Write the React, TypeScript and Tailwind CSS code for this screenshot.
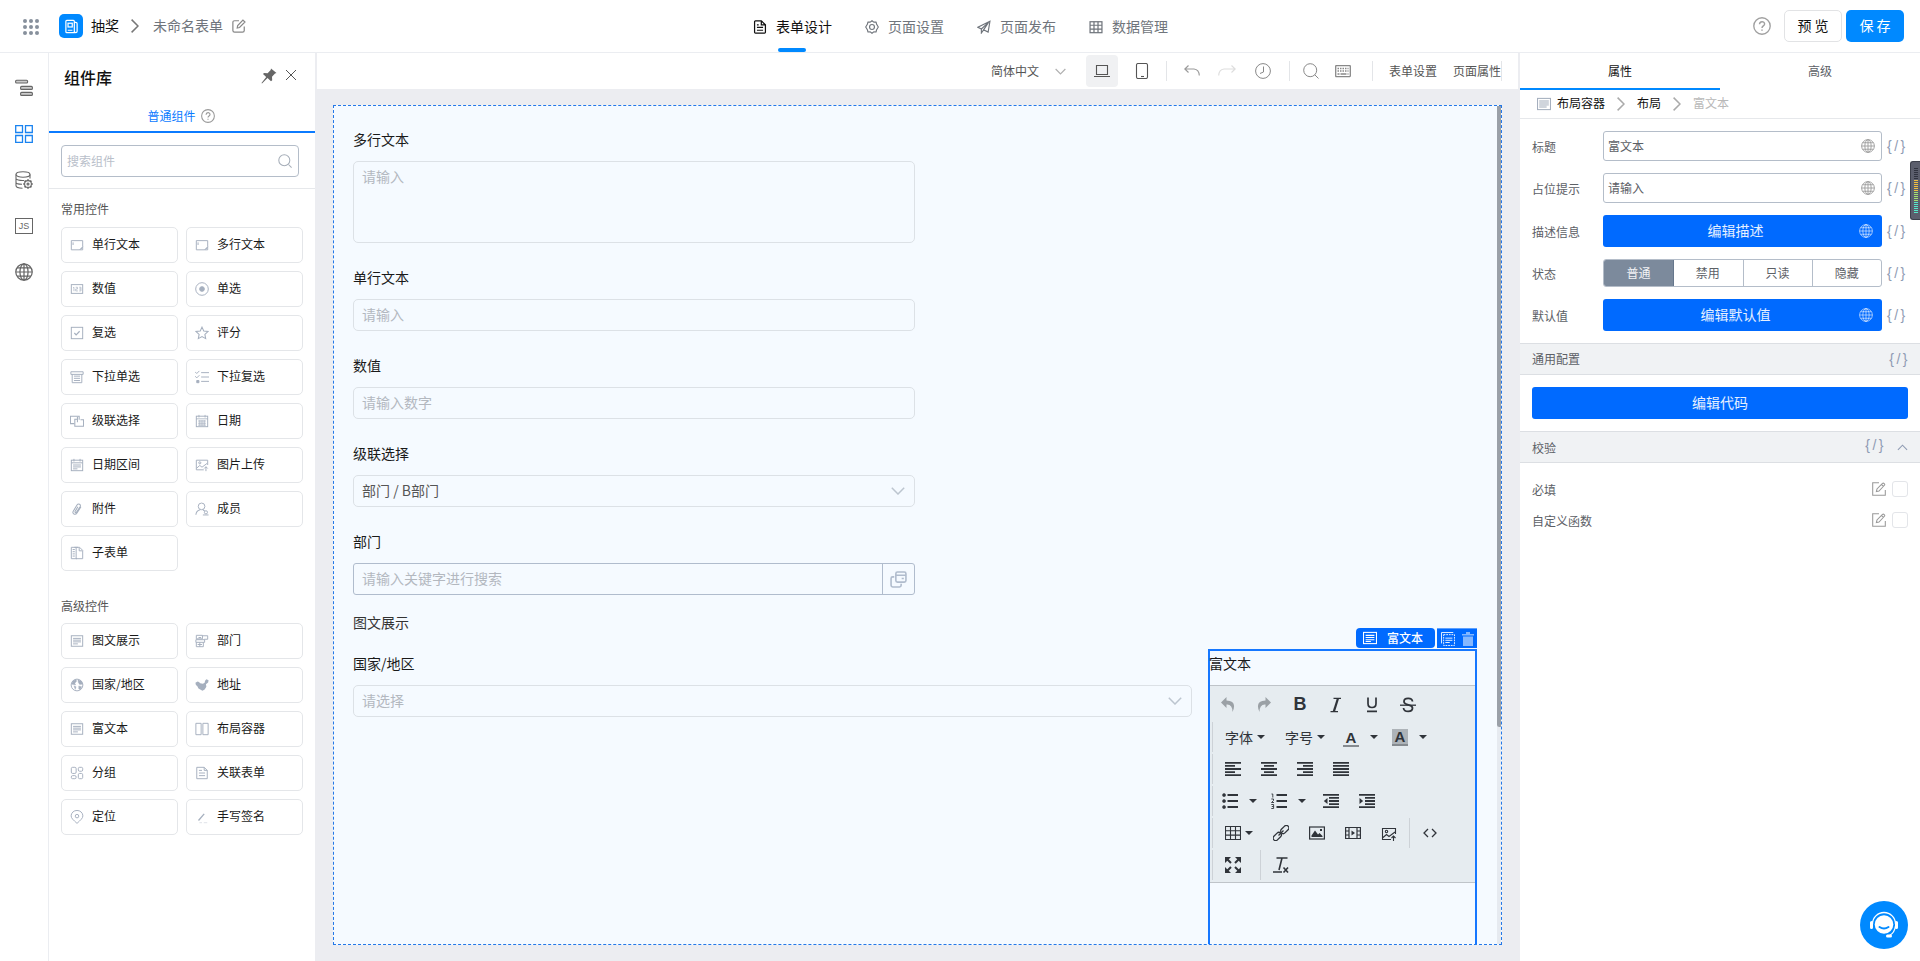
import React from 'react';

interface IconProps {
  children: React.ReactNode;
  box?: string;
  className?: string;
  strokeWidth?: number;
}

const Icon: React.FC<IconProps> = ({ children, box = '0 0 16 16', className = 'w-4 h-4', strokeWidth = 1 }) => (
  <svg viewBox={box} className={`shrink-0 ${className}`} fill="none" stroke="currentColor" strokeWidth={strokeWidth}>
    {children}
  </svg>
);

const GlobeIcon = ({ className = 'w-[14px] h-[14px]' }: { className?: string }) => (
  <Icon className={className} strokeWidth={1.1}>
    <circle cx="8" cy="8" r="7.3" />
    <ellipse cx="8" cy="8" rx="3.6" ry="7.3" />
    <path d="M8 .7v14.6M.7 8h14.6M1.8 4.3h12.4M1.8 11.7h12.4" />
  </Icon>
);

const HelpIcon = ({ className = 'w-[14px] h-[14px]' }: { className?: string }) => (
  <Icon className={className} strokeWidth={1.2}>
    <circle cx="8" cy="8" r="7.3" />
    <path d="M5.8 6.5c0-3 4.5-3 4.5-.3C10.3 8 8 7.9 8 9.7M8 11v1.3" strokeWidth={1.3} />
  </Icon>
);

const Chevron = ({ className = '' }: { className?: string }) => (
  <Icon box="0 0 8 14" className={`w-[8px] h-[14px] ${className}`} strokeWidth={1.5}>
    <path d="M.6.6L7 7 .6 13.4" />
  </Icon>
);

const DownIcon = ({ className = '' }: { className?: string }) => (
  <Icon box="0 0 14 8" className={className} strokeWidth={1.5}>
    <path d="M.8.8L7 7 13.2.8" />
  </Icon>
);

const icons: Record<string, React.ReactNode> = {
  input: (
    <>
      <path d="M14.5 10V3h-13v10.5H11M3.5 5v3" />
      <path d="M14.5 10v3.5H11zM12 13l2-2" />
    </>
  ),
  number: (
    <>
      <rect x="1.5" y="3" width="13" height="10" />
      <path d="M3.5 6.5L4.5 6v4.5M6.5 6h2v2h-2v2.2h2.5M10.5 6h2v4.2h-2M10.5 8h2" strokeWidth={0.8} />
    </>
  ),
  radio: (
    <>
      <circle cx="8" cy="8" r="7.2" />
      <circle cx="8" cy="8" r="2.7" fill="currentColor" />
    </>
  ),
  check: (
    <>
      <rect x="1.5" y="1.5" width="13" height="13" />
      <path d="M5 8l2 2.2 4-4.2" strokeWidth={1.3} />
    </>
  ),
  star: <path d="M8 1.3l2 4.4 4.8.6-3.5 3.3.9 4.8L8 12.1l-4.2 2.3.9-4.8L1.2 6.3 6 5.7z" strokeWidth={1.2} />,
  select: (
    <>
      <path d="M1 2h14v3H1zM2.5 5v9.5h11V5" />
      <path d="M4.5 7h7M4.5 9.5h7M4.5 12h7" />
    </>
  ),
  multi: (
    <>
      <path d="M0 2l2 2 3-3M0 7l2 2 3-3M7 3h9M7 8h9M7 13h9" />
      <path d="M2 12h2.5v2.5H2z" fill="currentColor" />
    </>
  ),
  cascade: (
    <>
      <path d="M5 11H.5V2.500h10V6.500" strokeWidth={1.2} />
      <path d="M8 6H5.500v8h10V6.500H12M8.500 3v6.500" strokeWidth={1.2} />
    </>
  ),
  date: (
    <>
      <rect x="1.5" y="2.5" width="13" height="12" />
      <path d="M1.500 5.500h13M4.500 1v3M11.500 1v3M3.500 8h9M3.500 10.500h9M3.500 12.700h9M5.500 7v6.500M8 7v6.500M10.500 7v6.500" strokeWidth={0.9} />
    </>
  ),
  range: (
    <>
      <rect x="1.5" y="2.5" width="13" height="12" />
      <path d="M1.500 5.500h13M4.500 1v3M11.500 1v3M3.500 8h9M3.500 10.200h9M3.500 12.400h5" />
    </>
  ),
  image: (
    <>
      <path d="M14.500 8V2.500h-13v11H10M2 11.500l3.500-3 2.500 2L14 6" />
      <circle cx="5.5" cy="5.5" r="1.2" />
      <path d="M12.500 15v-5M10.500 12l2-2 2 2" />
    </>
  ),
  clip: <path d="M12.500 5.500l-4.500 7c-2 3-6 1-4.300-2L8 3.500c1.500-2.500 5-.7 3.500 2l-4 6c-.8 1.200-2.300.4-1.600-.9L9 5.500" strokeWidth={1.2} />,
  member: (
    <>
      <circle cx="7.5" cy="5" r="3.8" />
      <path d="M1 14.500c.3-3 2-5 5-5.700M9 9c1 .3 1.500.8 2 1.200" strokeWidth={1.2} />
      <circle cx="12.5" cy="11.8" r="1.8" />
      <path d="M9 14.800h6.500" />
    </>
  ),
  subform: (
    <>
      <path d="M9 1.500H1.500v13H8M5 1.500h6L14.500 5v9.500H7V2M10.500 2v3.500H14" />
      <path d="M3 4h2.500M3 6.500h2.500M3 9h2.500M3 11.500h2.500" />
    </>
  ),
  text: (
    <>
      <rect x="1.500" y="2" width="13" height="12" />
      <path d="M3.500 5h9M3.500 7h9M3.500 9h9M3.500 11.300h5.500" />
    </>
  ),
  dept: <path d="M1.500 1.500h7v4h-7zM1 6.500h10v3H1zM1.500 9.500v5h8v-5M8.500 2h6v4h-4M3 12h5M4 4h3M5.500 9.500v5" />,
  world: (
    <>
      <circle cx="8" cy="8" r="6.700" />
      <path d="M3 3.500l4-1.800.5 2L5.500 6l1 2-3-.5L2 7zM9 2l4 1.500L14.500 7 11 7.500 9.500 5zM10 9l3.500 1-2 3.500-1.500-1zM4.500 9l2.500 1-1 3z" fill="currentColor" strokeWidth={0.4} />
    </>
  ),
  china: (
    <path d="M.5 5.500L3 4l1.500.5L6 6l3 .5 2-1L11.500 3 13 1.500l2.500 1L15 5l-2.500 2 .5 3-2 3-2.500 1.500L6 13l-2-1L2.500 9 1 8z" fill="currentColor" stroke="none" />
  ),
  columns: <path d="M1 1.500h6v13H1zM9 1.500h6v13H9z" />,
  group: (
    <>
      <rect x="1.500" y="1.500" width="5.500" height="7" rx="1.500" />
      <rect x="1.500" y="11" width="5.500" height="3.500" rx="1.500" />
      <rect x="9.500" y="1.500" width="5" height="4.500" rx="1.500" />
      <rect x="9.500" y="8.500" width="5" height="6" rx="1.500" />
    </>
  ),
  linked: <path d="M10.500 1.500H2v13h12V5zM10.500 1.500V5H14M4.500 5h3.500M4.500 8h7M4.500 11h7" strokeWidth={1.1} />,
  pin: (
    <>
      <path d="M8 15.300C4 11.500 1.300 9.500 1.300 6.700a6.700 6.200 0 0 1 13.400 0C14.700 9.500 12 11.500 8 15.300z" strokeWidth={1.1} />
      <circle cx="8" cy="7" r="2" strokeWidth={1.1} />
    </>
  ),
  sign: (
    <>
      <path d="M4 12l6.500-7.500" strokeWidth={1.5} />
      <path d="M5 14.500h3M10 14.500h4" strokeWidth={0.4} />
    </>
  ),
};

const commonWidgets = [
  ['input', '单行文本'],
  ['input', '多行文本'],
  ['number', '数值'],
  ['radio', '单选'],
  ['check', '复选'],
  ['star', '评分'],
  ['select', '下拉单选'],
  ['multi', '下拉复选'],
  ['cascade', '级联选择'],
  ['date', '日期'],
  ['range', '日期区间'],
  ['image', '图片上传'],
  ['clip', '附件'],
  ['member', '成员'],
  ['subform', '子表单'],
];

const advancedWidgets = [
  ['text', '图文展示'],
  ['dept', '部门'],
  ['world', '国家/地区'],
  ['china', '地址'],
  ['text', '富文本'],
  ['columns', '布局容器'],
  ['group', '分组'],
  ['linked', '关联表单'],
  ['pin', '定位'],
  ['sign', '手写签名'],
];

const WidgetGrid = ({ items }: { items: string[][] }) => (
  <div className="grid grid-cols-[117px_117px] gap-x-2 gap-y-2">
    {items.map(([icon, name]) => (
      <button key={name} className="flex h-9 items-center rounded-[5px] border border-[#e4e6e9] pl-[8px] text-[#1a1a1a]">
        <Icon className="w-[14px] h-[14px] text-[#a5afbe]" strokeWidth={1.1}>{icons[icon]}</Icon>
        <span className="ml-2 pb-[2px]">{name}</span>
      </button>
    ))}
  </div>
);

const EditIcon = ({ className = 'w-[14px] h-[14px]' }: { className?: string }) => (
  <Icon className={className} strokeWidth={1.2}>
    <path d="M8 .8H.8v14.400h14.400V9" />
    <path d="M5 11l.7-3L12 1.700c1.200-1.200 3.300.8 2.200 2L8 10.300z M11 3l2 2" />
  </Icon>
);

const Header = () => (
  <header className="flex h-[53px] shrink-0 items-center border-b border-[#ebedf1] bg-white text-sm text-[#70757c]">
    <div className="flex w-[753px] items-center pl-[23px]">
      <svg viewBox="0 0 16 16" className="mt-[2px] h-4 w-4" fill="#87909c">
        {[2, 8, 14].map((x) => [2, 8, 14].map((y) => <circle key={`${x}-${y}`} cx={x} cy={y} r="2" />))}
      </svg>
      <span className="ml-5 flex h-6 w-6 items-center justify-center rounded-[5px] bg-[#0089ff] text-white">
        <Icon className="h-[15px] w-[15px]" strokeWidth={1.3}>
          <path d="M3 1.500h7q1 0 1 1v12H3q-1 0-1-1v-11q0-1 1-1zM11 3.500h1.500q1.500 0 1.500 1.500v8c0 2-3 2-3 0M4 12h5" />
          <rect x="4.3" y="4.5" width="4.5" height="4" />
        </Icon>
      </span>
      <span className="ml-2 pb-[2px] text-[#111]">抽奖</span>
      <Chevron className="ml-3 text-[#777]" />
      <span className="ml-[14px] pb-[2px]">未命名表单</span>
      <Icon className="ml-[9px] h-[14px] w-[14px] text-[#888]" strokeWidth={1.4}>
        <path d="M8 2H3Q1 2 1 4v9q0 2 2 2h9q2 0 2-2V8.500" />
        <path d="M6 10.200l.5-2.700 6-6.300 2.300 2.200-6.200 6.300z" />
      </Icon>
    </div>
    <nav className="flex h-full flex-1 gap-10">
      <div className="relative flex items-center pt-[2px] text-[#111]">
        <Icon className="h-[14px] w-[14px]" strokeWidth={1.4}>
          <path d="M9.500 1H2.800Q1.800 1 1.800 2v12q0 1 1 1h10.400q1 0 1-1V5.500zM9.500 1v4.500h4.700M4.500 5.500h2M4.500 8.500h7M4.500 11.700h7" />
        </Icon>
        <span className="ml-[9px] pb-[2px]">表单设计</span>
        <i className="absolute bottom-0 left-[25px] h-1 w-7 rounded-sm bg-[#0089ff]" />
      </div>
      <div className="-ml-[7px] flex items-center pt-[2px]">
        <Icon className="h-[14px] w-[14px]" strokeWidth={1.3}>
          <path d="M8 .8l2 1.700 2.600-.2.700 2.600L15.200 8l-1.900 3.100-.7 2.600-2.600-.2-2 1.700-2-1.700-2.600.2-.7-2.600L.8 8l1.900-3.100.7-2.600 2.600.2z" strokeLinejoin="round" />
          <circle cx="8" cy="8" r="2.800" />
        </Icon>
        <span className="ml-[9px] pb-[2px]">页面设置</span>
      </div>
      <div className="-ml-[7px] flex items-center pt-[2px]">
        <Icon className="h-[14px] w-[14px]" strokeWidth={1.3}>
          <path d="M14.800 1.500L1 8.300l4 2 8.200-7.600L7.500 11.300l5.200 2.500zM5 10.300v4.500l2.500-3.500" />
        </Icon>
        <span className="ml-[9px] pb-[2px]">页面发布</span>
      </div>
      <div className="-ml-[7px] flex items-center pt-[2px]">
        <Icon className="h-[14px] w-[14px]" strokeWidth={1.4}>
          <rect x="1.2" y="2" width="13.6" height="12.5" />
          <path d="M1.200 6h13.600M1.200 10.300h13.600M5.700 2v12.500M10.300 2v12.500" />
        </Icon>
        <span className="ml-[9px] pb-[2px]">数据管理</span>
      </div>
    </nav>
    <div className="flex items-center pr-4">
      <HelpIcon className="h-[18px] w-[18px] text-[#a0a0a0]" />
      <button className="ml-[13px] h-8 w-[58px] rounded-[5px] border border-[#e2e3e5] pb-[2px] text-[#111]">预 览</button>
      <button className="ml-1 h-8 w-[58px] rounded-[5px] bg-[#0089ff] pb-[2px] text-white">保 存</button>
    </div>
  </header>
);

const Rail = () => (
  <aside className="flex w-[49px] shrink-0 flex-col items-center gap-7 border-r border-[#ebedf1] bg-white pt-[26px] text-[#666]">
    <Icon box="0 0 18 18" className="h-[18px] w-[18px]" strokeWidth={1.1}>
      <rect x=".6" y="1.2" width="12" height="2.8" rx="1" fill="#ccc" />
      <rect x="5.6" y="7.4" width="11.8" height="3" rx="1" fill="#ccc" />
      <rect x="5.6" y="13.4" width="11.8" height="3" rx="1" fill="#ccc" />
    </Icon>
    <Icon box="0 0 18 18" className="h-[18px] w-[18px] text-[#1a83f0]" strokeWidth={1.3}>
      <path d="M.7.7h6.800v6.800H.7zM10.500.7h6.800v6.800h-6.800zM.7 10.500h6.800v6.800H.7zM10.500 10.500h6.800v6.800h-6.800z" />
    </Icon>
    <Icon box="0 0 18 18" className="h-[18px] w-[18px]" strokeWidth={1.1}>
      <ellipse cx="8" cy="3.5" rx="7" ry="2.7" />
      <path d="M1 3.500v11c0 1.500 3 2.700 6.500 2.700M15 3.500v4M1 7.500c0 1.200 3.500 2.300 8 2M1 11.300c0 1 2.500 2 6 2" />
      <circle cx="13" cy="13" r="3.4" />
      <circle cx="13" cy="13" r="1" />
      <path d="M13 8.200v1.400M13 16.400v1.400M8.200 13h1.400M16.400 13h1.400M9.600 9.600l1 1M15.400 15.400l1 1M9.600 16.400l1-1M15.400 10.600l1-1" strokeWidth={1.6} />
    </Icon>
    <div className="flex h-[18px] w-[18px] items-center">
      <span className="flex h-4 w-[18px] items-center justify-center border border-[#666] font-['Liberation_Sans'] text-[9px] leading-none">JS</span>
    </div>
    <GlobeIcon className="h-[18px] w-[18px]" />
  </aside>
);

const Library = () => (
  <aside className="w-[266px] shrink-0 bg-white text-xs">
    <div className="flex h-[50px] items-center pl-[15px]">
      <h2 className="pb-[2px] text-base font-medium text-[#111]">组件库</h2>
      <Icon className="-mt-[5px] ml-[149px] h-4 w-4 text-[#666]">
        <path d="M10 .5l5.500 4.500-1.500.6-3 3.200.2 3.500-1.200 1L6.500 10 1 15.500l-.5-.5 4.700-6L2 6l1-1 3.600.3L9.700 2z" fill="currentColor" stroke="none" />
      </Icon>
      <Icon box="0 0 12 12" className="-mt-[6px] ml-[8px] h-3 w-3 text-[#555]">
        <path d="M1 1l10 10M11 1L1 11" />
      </Icon>
    </div>
    <div className="flex h-[30px] items-start justify-center border-b-2 border-[#0b7bff] pt-[5px] text-[#0b7bff]">
      <div className="-ml-[2px] flex h-4 items-center">
        普通组件
        <HelpIcon className="ml-[5px] h-[14px] w-[14px] text-[#999]" />
      </div>
    </div>
    <div className="border-b border-[#e6e8eb] px-3 pt-3 pb-[11px]">
      <div className="flex h-8 w-[238px] items-center justify-between rounded-sm border border-[#b4bdc9] pr-[6px] pl-[5px] text-[#b9c0ca]">
        <span className="pb-px">搜索组件</span>
        <Icon className="h-[14px] w-[14px] text-[#a5adb8]" strokeWidth={1.2}>
          <circle cx="7.2" cy="7.2" r="6.3" />
          <path d="M12 12l3.500 3.500" />
        </Icon>
      </div>
    </div>
    <div className="px-3">
      <h3 className="flex h-[38px] items-center pt-[2px] text-[#555]">常用控件</h3>
      <WidgetGrid items={commonWidgets} />
      <h3 className="mt-4 flex h-9 items-center pt-[2px] text-[#555]">高级控件</h3>
      <WidgetGrid items={advancedWidgets} />
    </div>
  </aside>
);

const Divider = ({ className = '' }: { className?: string }) => <i className={`h-5 w-px bg-[#e3e5e8] ${className}`} />;

const Toolbar = () => (
  <div className="mx-[2px] flex h-9 shrink-0 items-center justify-end bg-white pr-4 text-xs text-[#555]">
    <span className="pb-px">简体中文</span>
    <DownIcon className="ml-4 h-[7px] w-[11px] text-[#b0b0b0]" />
    <span className="ml-5 flex h-8 w-8 items-center justify-center rounded-sm bg-[#f0f1f3]">
      <Icon strokeWidth={1.1}>
        <path d="M2.500 2.500h11v9h-11zM0 13.500h16" />
      </Icon>
    </span>
    <Icon className="ml-[16px] h-4 w-4" strokeWidth={1.1}>
      <rect x="2.5" y=".5" width="11" height="15" rx="1.5" />
      <path d="M7 13.500h3" />
    </Icon>
    <Divider className="ml-[16px]" />
    <Icon className="ml-[17px] h-4 w-4 text-[#999]" strokeWidth={1.1}>
      <path d="M4.500 2.500L.8 6l3.700 3.500M1 6h9q5 .5 5.300 6.500" />
    </Icon>
    <Icon className="ml-[18px] h-4 w-[18px] text-[#ddd]" box="0 0 18 16" strokeWidth={1.1}>
      <path d="M13.500 2.500L17.200 6l-3.700 3.500M17 6H6Q1 6.500.7 12.500" />
    </Icon>
    <Icon className="ml-[19px] h-4 w-4 text-[#888]">
      <circle cx="8" cy="8" r="7.4" />
      <path d="M8.500 3.500v5.500L5 10.500" />
    </Icon>
    <Divider className="ml-[18px]" />
    <Icon className="ml-[13px] h-4 w-4 text-[#888]">
      <circle cx="7.200" cy="7.200" r="6.500" />
      <path d="M11.800 11.800l3.700 3.700" />
    </Icon>
    <Icon className="ml-[16px] h-4 w-4 text-[#888]" strokeWidth={1.3}>
      <rect x=".7" y="2.600" width="14.600" height="11" rx=".5" />
      <path d="M2.500 5.500h11M2.500 8h11" strokeDasharray="1.500 1" />
      <path d="M2.500 11h2M5.500 11h6M12.500 11h1" />
    </Icon>
    <Divider className="ml-[21px]" />
    <span className="ml-4 pb-px">表单设置</span>
    <span className="ml-4 pb-px">页面属性</span>
    <Divider />
  </div>
);

interface FieldProps {
  label: string;
  children: React.ReactNode;
}

const Field: React.FC<FieldProps> = ({ label, children }) => (
  <div className="mb-[23px]">
    <div className="mb-3 flex h-[21px] items-center text-[#1a1a1a]">{label}</div>
    {children}
  </div>
);

const inputBox = 'flex h-8 items-center rounded-[5px] border border-[#dce1e6] px-2 pb-[2px] text-[#b3b8bf]';

const Caret = ({ className = '' }: { className?: string }) => (
  <svg viewBox="0 0 8 4" className={`h-1 w-2 shrink-0 ${className}`} fill="#30343a">
    <path d="M0 0h8L4 4z" />
  </svg>
);

const Tool = ({ children, className = 'w-9' }: { children: React.ReactNode; className?: string }) => (
  <span className={`flex h-full shrink-0 items-center justify-center ${className}`}>{children}</span>
);

const Sep = ({ className = 'ml-[2px] mr-[2px]' }: { className?: string }) => (
  <i className={`h-[30px] w-px shrink-0 bg-[#cdd2d7] ${className}`} />
);

const Lines = ({ d }: { d: string }) => (
  <Icon strokeWidth={1.8}>
    <path d={d} />
  </Icon>
);

const RichText = () => (
  <div className="relative h-[340px] w-[269px] shrink-0 border-2 border-[#1677ff]">
    <div className="absolute -top-[23px] -right-[2px] flex gap-[2px] text-xs text-white">
      <span className="flex h-5 w-[79px] items-center rounded-sm bg-[#006aff] pl-[7px] font-medium">
        <Icon className="h-[14px] w-[14px]" strokeWidth={1.2}>
          <rect x=".6" y="1.6" width="14.8" height="12.8" />
          <path d="M3 5h10M3 7.500h10M3 10h10M3 12h6" />
        </Icon>
        <span className="ml-[10px]">富文本</span>
      </span>
      <span className="flex h-5 w-10 items-center justify-center gap-[7px] border-t border-[#5b9fff] bg-[#006aff]">
        <Icon className="h-[14px] w-[14px]">
          <path d="M.6 13V.6H14" />
          <rect x="3" y="3" width="12.4" height="12.4" strokeDasharray="2 1" />
          <path d="M5 7h8M5 9.500h8M5 12h5" />
        </Icon>
        <Icon className="h-[14px] w-3 text-[#84b7ff]" box="0 0 12 14">
          <path d="M4 0h4v2h4v1.500H0V2h4zM1 4.500h10V14H1z" fill="currentColor" stroke="none" />
        </Icon>
      </span>
    </div>
    <div className="-ml-px flex h-[34px] items-center pb-[10px] text-[#1a1a1a]">富文本</div>
    <div className="h-[198px] border-y border-[#bfc4c9] bg-[#e6ecf0] pt-[3px] text-[#30343a]">
      <div className="flex h-8 items-center">
        <Tool>
          <Icon className="h-4 w-4 text-[#9ba1a6]">
            <path d="M6.500 0L1 5.500 6.500 11V7.500q6-.5 6 7.500Q17.500 4 6.500 3.500z" fill="currentColor" stroke="none" />
          </Icon>
        </Tool>
        <Tool>
          <Icon className="h-4 w-4 text-[#9ba1a6]">
            <path d="M9.500 0L15 5.500 9.500 11V7.500q-6-.5-6 7.500Q-1.500 4 9.500 3.500z" fill="currentColor" stroke="none" />
          </Icon>
        </Tool>
        <Tool><b className="font-['Liberation_Sans'] text-[18px]">B</b></Tool>
        <Tool>
          <Icon strokeWidth={1.3}>
            <path d="M5.500 1.300h7.500M2.500 14.700h7.500" />
            <path d="M10 1.300L5.800 14.700" strokeWidth={2.2} />
          </Icon>
        </Tool>
        <Tool>
          <Icon strokeWidth={1.7}>
            <path d="M4 .5v6q0 4 4 4t4-4v-6M3 14.300h10" />
          </Icon>
        </Tool>
        <Tool>
          <Icon strokeWidth={1.8}>
            <path d="M12.500 4.500C12 0 4 .5 4 4.500c0 4.500 8.500 2.500 8.500 6.500 0 4.500-8.500 4.500-9 0" />
            <path d="M0 8.200h16" strokeWidth={1.3} />
          </Icon>
        </Tool>
      </div>
      <div className="flex h-8 items-center">
        <Sep />
        <span className="ml-[10px] pb-px">字体</span>
        <Caret className="ml-1" />
        <span className="ml-5 pb-px">字号</span>
        <Caret className="ml-1" />
        <span className="ml-[18px] mt-[3px] flex h-[17px] w-4 items-center justify-center border-b-2 border-[#868b90] font-['Liberation_Sans'] text-[15px] leading-none font-bold">A</span>
        <Caret className="ml-[11px]" />
        <span className="ml-[14px] mt-px flex h-[17px] w-4 items-center justify-center border-b-2 border-[#868b90] bg-[#adb3b8] font-['Liberation_Sans'] text-[15px] leading-none font-bold">A</span>
        <Caret className="ml-[11px]" />
      </div>
      <div className="flex h-8 items-center">
        <Sep />
        <Tool><Lines d="M0 1.800h16M0 4.900h10M0 8h16M0 11.100h10M0 14.200h16" /></Tool>
        <Tool><Lines d="M0 1.800h16M3 4.900h10M0 8h16M3 11.100h10M0 14.200h16" /></Tool>
        <Tool><Lines d="M0 1.800h16M6 4.900h10M0 8h16M6 11.100h10M0 14.200h16" /></Tool>
        <Tool><Lines d="M0 1.800h16M0 4.900h16M0 8h16M0 11.100h16M0 14.200h16" /></Tool>
      </div>
      <div className="flex h-8 items-center">
        <Sep />
        <Tool className="w-[49px] gap-[11px] pr-[7px] pl-[7px]">
          <Icon strokeWidth={1.8}>
            <path d="M5.500 2H16M5.500 8H16M5.500 14H16" />
            <path d="M2 .2a1.800 1.800 0 1 0 .1 0M2 6.200a1.800 1.800 0 1 0 .1 0M2 12.200a1.800 1.800 0 1 0 .1 0" fill="currentColor" stroke="none" />
          </Icon>
          <Caret />
        </Tool>
        <Tool className="w-[49px] gap-[11px] pr-[7px] pl-[7px]">
          <Icon strokeWidth={1.8}>
            <path d="M5.500 2H16M5.500 8H16M5.500 14H16" />
            <path d="M.5 1h1.300v3.500M.3 6h2.200v1.500L.5 9.500h2.500M.3 11.500h2.300v4H.3M.8 13.500h1.800" strokeWidth={0.9} />
          </Icon>
          <Caret />
        </Tool>
        <Tool>
          <Icon strokeWidth={1.8}>
            <path d="M0 1.800h16M6 4.900h10M6 8h10M6 11.100h10M0 14.200h16" />
            <path d="M4.500 5v6L.8 8z" fill="currentColor" stroke="none" />
          </Icon>
        </Tool>
        <Tool>
          <Icon strokeWidth={1.8}>
            <path d="M0 1.800h16M6 4.900h10M6 8h10M6 11.100h10M0 14.200h16" />
            <path d="M.5 5v6l3.700-3z" fill="currentColor" stroke="none" />
          </Icon>
        </Tool>
      </div>
      <div className="flex h-8 items-center">
        <Sep />
        <Tool className="w-12 gap-1">
          <Icon strokeWidth={1.1}>
            <path d="M.5 1.500h15v13H.5zM.5 5.800h15M.5 10.100h15M5.500 1.500v13M10.500 1.500v13" />
          </Icon>
          <Caret />
        </Tool>
        <Tool>
          <Icon strokeWidth={1.3}>
            <rect x="7" y="2" width="9.5" height="5" rx="2.5" transform="rotate(-45 11.750 4.500)" />
            <rect x="-.5" y="9" width="9.5" height="5" rx="2.5" transform="rotate(-45 4.250 11.500)" />
            <path d="M5.500 10.500l5-5" />
          </Icon>
        </Tool>
        <Tool>
          <Icon strokeWidth={1.2}>
            <rect x=".6" y="2" width="14.8" height="12" />
            <path d="M2.500 12V10.500l3.500-5 3 4 1.500-1.500 3 3V12zM11 4h2v2h-2z" fill="currentColor" stroke="none" />
          </Icon>
        </Tool>
        <Tool>
          <Icon strokeWidth={1.2}>
            <path d="M.6 2.500h14.800v11H.6zM4 2.500v11M12 2.500v11M.6 6H4M.6 10H4M12 6h3.400M12 10h3.400" />
            <path d="M6.500 5.500v5L10 8z" fill="currentColor" stroke="none" />
          </Icon>
        </Tool>
        <Tool><Icon className="mt-[2px] h-4 w-4" strokeWidth={1.1}>{icons.image}</Icon></Tool>
        <Sep className="ml-[2px]" />
        <Tool className="ml-[2px] w-9">
          <Icon className="h-4 w-[14px]" box="0 0 14 16" strokeWidth={1.3}>
            <path d="M5 4L1 8l4 4M9 4l4 4-4 4" />
          </Icon>
        </Tool>
      </div>
      <div className="flex h-8 items-center">
        <Sep />
        <Tool>
          <Icon strokeWidth={2}>
            <path d="M1.500 1.500L6 6M14.500 1.500L10 6M1.500 14.500L6 10M14.500 14.500L10 10" />
            <path d="M0 0h6L0 6zM16 0h-6l6 6zM0 16h6l-6-6zM16 16h-6l6-6z" fill="currentColor" stroke="none" />
          </Icon>
        </Tool>
        <Sep className="ml-[9px]" />
        <Tool className="ml-[2px] w-9">
          <Icon strokeWidth={1.6}>
            <path d="M3.500 1h11M9 1L6 13M0 15h9M10.500 10.500l4.500 5M15 10.500l-4.500 5" />
          </Icon>
        </Tool>
      </div>
    </div>
  </div>
);

const Canvas = () => (
  <div className="relative mr-[18px] ml-[18px] mt-4 h-[840px] overflow-hidden border border-dashed border-[#2378e8] bg-[#f5faff] pt-[22px] pl-[19px] text-sm">
    <div className="w-[562px]">
      <Field label="多行文本">
        <div className="h-[82px] rounded-[5px] border border-[#dce1e6] px-2 pt-1 text-[#b3b8bf]">请输入</div>
      </Field>
      <Field label="单行文本">
        <div className={inputBox}>请输入</div>
      </Field>
      <Field label="数值">
        <div className={inputBox}>请输入数字</div>
      </Field>
      <Field label="级联选择">
        <div className="flex h-8 items-center justify-between rounded-[5px] border border-[#dce1e6] pr-[9px] pl-2 text-[#555]">
          <span className="pb-[3px]">部门 / B部门</span>
          <DownIcon className="h-[8px] w-[14px] text-[#bcc5cf]" />
        </div>
      </Field>
      <Field label="部门">
        <div className="flex h-8 items-center rounded-[3px] border border-[#b0bccd] pl-2 text-[#b3b8bf]">
          <span className="flex-1 pb-[2px]">请输入关键字进行搜索</span>
          <span className="flex h-full w-8 items-center justify-center border-l border-[#b0bccd] text-[#b0bccd]">
            <Icon className="h-[17px] w-[17px]" strokeWidth={1.5}>
              <rect x="5.5" y="1" width="9.5" height="9.5" rx="1.5" />
              <path d="M5.500 4H15M4 5.500H2.500Q1 5.500 1 7v6.500Q1 15 2.500 15H9q1.500 0 1.500-1.500V12M11 7h2" />
            </Icon>
          </span>
        </div>
      </Field>
    </div>
    <div className="-mt-[7px] flex h-[21px] items-center text-[#333]">图文展示</div>
    <div className="mt-[17px] flex items-start gap-4">
      <div className="w-[839px] pt-[3px]">
        <Field label="国家/地区">
          <div className="flex h-8 items-center justify-between rounded-[5px] border border-[#dce1e6] pr-[9px] pl-2 text-[#b3b8bf]">
            <span className="pb-[2px]">请选择</span>
            <DownIcon className="h-[8px] w-[14px] text-[#bcc5cf]" />
          </div>
        </Field>
      </div>
      <RichText />
    </div>
    <div className="absolute top-0 -right-px h-full w-[5px] bg-[#e6eaf0]">
      <i className="block h-[621px] rounded-b-sm bg-[#9aa0a8]" />
    </div>
    <i className="absolute top-0 -right-px h-full border-r border-dashed border-[#2378e8]" />
  </div>
);

const Code = ({ className = '' }: { className?: string }) => (
  <span className={`shrink-0 font-['Liberation_Sans'] text-sm tracking-[2.5px] text-[#8f9bb3] ${className}`}>{'{/}'}</span>
);

const PropRow = ({ label, children, className }: { label: string; children: React.ReactNode; className: string }) => (
  <div className={`mb-3 flex items-center ${className}`}>
    <span className="w-[71px] pt-[2px]">{label}</span>
    <div className="h-full w-[279px]">{children}</div>
    <Code className="ml-[5px] pb-px" />
  </div>
);

const BlueButton = ({ children, className = '' }: { children: React.ReactNode; className?: string }) => (
  <button className={`relative h-8 w-full rounded-[3px] bg-[#006aff] pb-[2px] text-sm text-white/90 ${className}`}>{children}</button>
);

const InputWithGlobe = ({ value }: { value: string }) => (
  <div className="flex h-full items-center justify-between rounded-[3px] border border-[#b4bdc9] pr-[6px] pl-[4px]">
    {value}
    <GlobeIcon className="h-[14px] w-[14px] text-[#a0a0a0]" />
  </div>
);

const Properties = () => (
  <aside className="w-[400px] shrink-0 bg-white text-xs text-[#5c6066]">
    <div className="grid h-9 grid-cols-2 text-center leading-[35px]">
      <span className="border-b-2 border-[#0089ff] text-[#111]">属性</span>
      <span>高级</span>
    </div>
    <div className="flex h-[30px] items-center border-b border-[#e6e8eb] pl-[17px] text-[#111]">
      <Icon className="h-[14px] w-[14px] text-[#a5afbe]" strokeWidth={1.2}>
        <rect x=".6" y="1.6" width="14.8" height="12.8" />
        <path d="M2.500 3.500h11v6.500H11v2.500H2.500z" fill="#d0d5dc" stroke="none" />
      </Icon>
      <span className="ml-[6px] pb-[2px]">布局容器</span>
      <Chevron className="ml-3 text-[#aaa]" />
      <span className="ml-3 pb-[2px]">布局</span>
      <Chevron className="ml-3 text-[#aaa]" />
      <span className="ml-[12px] pb-[2px] text-[#b8b8b8]">富文本</span>
    </div>
    <div className="px-3 pt-3">
      <PropRow label="标题" className="h-[30px]">
        <InputWithGlobe value="富文本" />
      </PropRow>
      <PropRow label="占位提示" className="h-[30px]">
        <InputWithGlobe value="请输入" />
      </PropRow>
      <PropRow label="描述信息" className="h-8">
        <BlueButton className="pr-[14px]">
          编辑描述
          <GlobeIcon className="absolute top-[9px] right-[9px] h-[14px] w-[14px] text-white/60" />
        </BlueButton>
      </PropRow>
      <PropRow label="状态" className="h-7">
        <div className="grid h-full grid-cols-4 overflow-hidden rounded-[3px] border border-[#b4bdc9] text-center leading-[26px]">
          <span className="-m-px border border-[#66778c] bg-[#7c8a9c] text-white/90">普通</span>
          <span>禁用</span>
          <span className="border-l border-[#b4bdc9]">只读</span>
          <span className="border-l border-[#b4bdc9]">隐藏</span>
        </div>
      </PropRow>
      <PropRow label="默认值" className="h-8">
        <BlueButton className="pr-[14px]">
          编辑默认值
          <GlobeIcon className="absolute top-[9px] right-[9px] h-[14px] w-[14px] text-white/60" />
        </BlueButton>
      </PropRow>
    </div>
    <div className="flex h-8 items-center justify-between border-y border-[#dcdfe3] bg-[#f0f2f4] pr-[10px] pl-3">
      通用配置
      <Code className="pb-px" />
    </div>
    <div className="p-3">
      <BlueButton>编辑代码</BlueButton>
    </div>
    <div className="flex h-8 items-center border-y border-[#dcdfe3] bg-[#f0f2f4] pr-3 pl-3">
      <span className="flex-1 pt-px">校验</span>
      <Code className="-mt-[5px]" />
      <Icon box="0 0 12 7" className="ml-[11px] mt-px h-[7px] w-[11px] text-[#8f9bb3]" strokeWidth={1.2}>
        <path d="M1 6l5-5 5 5" />
      </Icon>
    </div>
    <div className="pt-[11px] pr-3 pl-3">
      {['必填', '自定义函数'].map((name) => (
        <div key={name} className="mb-px flex h-[30px] items-center">
          <span className="flex-1 pt-[2px]">{name}</span>
          <EditIcon className="h-[14px] w-[14px] text-[#999]" />
          <i className="ml-[6px] h-4 w-4 rounded-[3px] border border-[#e3e5e9]" />
        </div>
      ))}
    </div>
  </aside>
);

const meter = Array.from({ length: 23 }, (_, i) => (i < 6 ? '#30333f' : i < 12 ? '#f0c040' : i < 17 ? '#a5e070' : '#56e8c8'));

const App: React.FC = () => (
  <div className="relative flex h-[961px] w-[1920px] flex-col overflow-hidden bg-[#ecedf1] font-['Noto_Sans_CJK_SC',sans-serif]">
    <Header />
    <div className="flex min-h-0 flex-1">
      <Rail />
      <Library />
      <main className="flex min-w-0 flex-1 flex-col">
        <Toolbar />
        <Canvas />
      </main>
      <Properties />
    </div>

    {/* Floating level meter */}
    <div className="absolute top-[161px] right-0 flex h-[59px] w-[10px] flex-col gap-px rounded-l-[3px] border border-r-0 border-[#3c3f4a] bg-[#5b5e6c] pt-[6px] pl-[3px]">
      {meter.map((color, i) => (
        <i key={i} className="h-px w-1 shrink-0" style={{ backgroundColor: color }} />
      ))}
    </div>

    {/* Support button */}
    <button className="absolute right-3 bottom-3 flex h-12 w-12 items-center justify-center rounded-full bg-[#0089ff]">
      <svg viewBox="0 0 30 28" className="h-7 w-[30px]" fill="none" stroke="white">
        <circle cx="15" cy="13.5" r="9.3" fill="white" stroke="none" />
        <path d="M3.500 13a11.500 11.500 0 0 1 23 0M26.500 15q-1 7-6 9.500" strokeWidth="1.3" />
        <path d="M2.500 11.500v5M27.500 11.500v5M18.500 25h3" strokeWidth="3" strokeLinecap="round" />
        <path d="M10.500 16q4.500 3 9 0" stroke="#0089ff" strokeWidth="2" strokeLinecap="round" />
      </svg>
    </button>
  </div>
);

export default App;
